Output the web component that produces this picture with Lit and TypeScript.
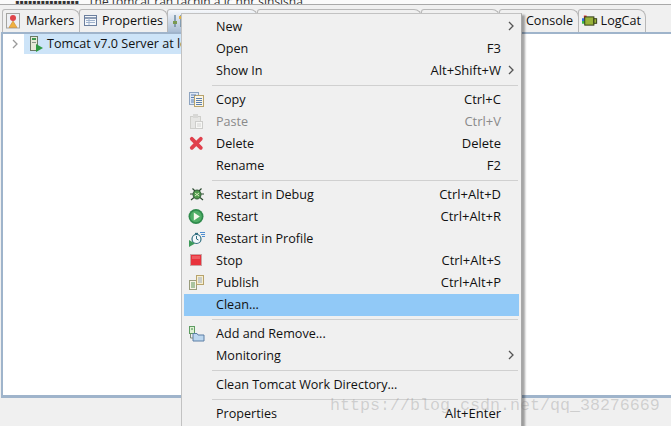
import { LitElement, html, css, svg } from "lit";
import { customElement } from "lit/decorators.js";

type Item = { l?: string; k?: string; sub?: boolean; ic?: string; dis?: boolean; hi?: boolean; sep?: boolean };
const items: Item[] = [
  { l: "New", sub: true },
  { l: "Open", k: "F3" },
  { l: "Show In", k: "Alt+Shift+W", sub: true },
  { sep: true },
  { l: "Copy", k: "Ctrl+C", ic: "copy" },
  { l: "Paste", k: "Ctrl+V", ic: "paste", dis: true },
  { l: "Delete", k: "Delete", ic: "del" },
  { l: "Rename", k: "F2" },
  { sep: true },
  { l: "Restart in Debug", k: "Ctrl+Alt+D", ic: "bug" },
  { l: "Restart", k: "Ctrl+Alt+R", ic: "run" },
  { l: "Restart in Profile", ic: "prof" },
  { l: "Stop", k: "Ctrl+Alt+S", ic: "stop" },
  { l: "Publish", k: "Ctrl+Alt+P", ic: "pub" },
  { l: "Clean...", hi: true },
  { sep: true },
  { l: "Add and Remove...", ic: "add" },
  { l: "Monitoring", sub: true },
  { sep: true },
  { l: "Clean Tomcat Work Directory..." },
  { sep: true },
  { l: "Properties", k: "Alt+Enter" },
];

const icons: Record<string, unknown> = {
  copy: svg`<rect x="1.500" y="1.500" width="9" height="12" fill="#dfe8f5" stroke="#8ea4c0"/><rect x="6.500" y="4.500" width="9" height="11" fill="#fbf6e6" stroke="#b8a36c"/><path d="M3 4h5M3 6.500h3M3 9h3M3 11h3M8 7.500h6M8 9.500h6M8 11.500h6M8 13.500h6" stroke="#5b7fb0"/>`,
  paste: svg`<rect x="2.500" y="3.500" width="10" height="12" fill="#e6e6e4" stroke="#cfcfcb"/><rect x="5" y="1" width="5" height="4" fill="#d8d8d6"/><rect x="7.500" y="8.500" width="7" height="7" fill="#f7f7f5" stroke="#cdcdcb"/><path d="M9 11h4M9 13h4" stroke="#d2d2d0"/>`,
  del: svg`<path d="M3.800 3.800l9 9M12.800 3.800l-9 9" stroke="#e0404c" stroke-width="3.800" stroke-linecap="round"/>`,
  bug: svg`<ellipse cx="9" cy="8.500" rx="4" ry="4.500" fill="#4f9a4d" stroke="#2d5a33"/><path d="M7 7l4 3M11 7l-4 3" stroke="#d9ecc0"/><path d="M4.500 2.500l2.500 2.500M13.500 2.500l-2.500 2.500M2 8h3M13 8h3M3 14l3-2.500M15 14l-3-2.500" stroke="#2c4a30" stroke-width="1.200"/>`,
  run: svg`<circle cx="8" cy="8.500" r="7.500" fill="#2f8a4c"/><circle cx="8" cy="8.500" r="5.800" fill="#4fae66"/><path d="M5.800 4.500l6 4-6 4z" fill="#f3f8ea"/>`,
  prof: svg`<circle cx="8.500" cy="9" r="4.500" fill="#f5f8fb" stroke="#2f6d7f" stroke-width="1.200"/><path d="M8.500 6v3l2 1" fill="none" stroke="#2f6d7f"/><path d="M7 3.500h3" stroke="#2f6d7f" stroke-width="1.300"/><path d="M1 10l6 3.500-6 3.500z" fill="#3d9a5a"/><path d="M12 2.500h5M13 4.500h4M14 6.500h3" stroke="#4f8fd0"/>`,
  stop: svg`<rect x="2.500" y="2.500" width="11" height="11" fill="#e8323c" stroke="#c9a3a3"/><rect x="4" y="4" width="8" height="3" fill="#ef5a60"/>`,
  pub: svg`<rect x="1.500" y="6.500" width="7" height="9" fill="#f6f4e6" stroke="#9a9c7c"/><rect x="8.500" y="1.500" width="7" height="9" fill="#f8efcf" stroke="#b7a36c"/><path d="M3 9h4M3 11h4M3 13h4" stroke="#5d9358"/><path d="M10 4h4M10 6h4M10 8h4" stroke="#9aa9c2"/>`,
  add: svg`<rect x="1.500" y="1.500" width="5" height="7" fill="#dff0d4" stroke="#5e9c62"/><path d="M3 4h2" stroke="#3f8a48"/><path d="M5 8.500h4l1 1.500h6v6H5z" fill="#bcd7ef" stroke="#5c7fa5"/><path d="M2.500 9v4H5" fill="none" stroke="#7c8a7c"/>`,
};

@customElement("app-root")
export class AppRoot extends LitElement {
  static styles = css`
    :host {
      display: block;
      width: 671px;
      height: 426px;
      overflow: hidden;
      position: relative;
      background: #f0f0f0;
      font-family: "Open Sans", "Noto Sans", sans-serif;
      font-size: 12.600px;
      color: #111;
    }
    .page { display: flex; flex-direction: column; height: 100%; }
    .top {
      height: 4px;
      flex: none;
      display: flex;
      gap: 6px;
      box-sizing: content-box;
      background: #fafafa;
      border-bottom: 1px solid #a9a9a9;
      overflow: hidden;
      font-size: 12px;
      line-height: 4px;
      padding-left: 15px;
      color: #333;
      white-space: pre;
    }
    .blk { width: 67px; overflow: hidden; flex: none; }
    .tabs { display: flex; height: 27px; flex: none; padding: 4px 0 0 2px; box-sizing: border-box; background: #f0f0f0; }
    .tab {
      display: flex;
      align-items: center;
      gap: 4px;
      padding: 0 4px 1px 3px;
      border: 1px solid #b8b8b8;
      border-bottom: none;
      border-radius: 3px 8px 0 0;
      margin-right: -1px;
      height: 23px;
      box-sizing: border-box;
      background: #f0f0f0;
      white-space: nowrap;
      flex: none;
    }
    .w-mark { width: 78px; }
    .w-prop { width: 89px; padding-left: 4px; }
    .w-act { width: 91px; padding-left: 4px; background: linear-gradient(#f6f8fb, #a9bdd4); }
    .w-fill { flex: 1; }
    .w-five { width: 79px; }
    .w-con { width: 80px; justify-content: flex-end; padding-right: 5px; }
    .w-log { width: 68px; gap: 3px; }
    .end { width: 26px; flex: none; }
    .panel {
      height: 366px;
      flex: none;
      margin: 0 0 0 1px;
      background: #fff;
      border: 3px solid #9fb4cb;
      border-top-width: 2px;
      border-left-width: 2px;
      border-right: none;
      box-sizing: border-box;
    }
    .tree { display: flex; align-items: center; height: 20px; }
    .tw { width: 21px; flex: none; display: flex; justify-content: flex-end; padding-right: 5px; box-sizing: border-box; }
    .row {
      display: flex;
      align-items: center;
      gap: 3px;
      height: 20px;
      width: 158px;
      background: #cde4f8;
      white-space: nowrap;
      overflow: hidden;
      padding: 0 0 1px 4px;
      box-sizing: border-box;
    }
    .row svg { flex: none; }
    .menu {
      position: absolute;
      left: 181px;
      top: 13px;
      width: 341px;
      height: 420px;
      box-sizing: border-box;
      background: #f0f0f0;
      border: 1px solid #c2c2c2;
      border-right-color: #a8a8a8;
      box-shadow: 3px 2px 2px rgba(0, 0, 0, 0.35);
      padding: 2px;
    }
    .it {
      display: grid;
      grid-template-columns: 32px 1fr auto 18px;
      align-items: center;
      height: 22px;
      box-sizing: border-box;
      padding-bottom: 2px;
      white-space: nowrap;
    }
    .it .ic { display: flex; justify-content: center; padding-right: 8px; }
    .it .k { text-align: right; font-size: 13px; }
    .it .ar { display: flex; justify-content: center; padding-left: 2px; }
    .dis { color: #8a8a8a; }
    .hi { background: #91c9f7; }
    .sepw { height: 7px; display: flex; align-items: center; }
    .sepw i { display: block; flex: 1; height: 1px; margin-left: 28px; margin-right: 1px; background: #d0d0d0; }
    .wm {
      position: absolute;
      left: 330px;
      top: 396px;
      font-family: "Liberation Mono", monospace;
      font-size: 16.670px;
      color: rgba(120, 120, 120, 0.28);
      white-space: nowrap;
      z-index: 2;
    }
  `;

  private chev(c = "#555") {
    return html`<svg width="8" height="10" viewBox="0 0 8 10"><path d="M2 1l4 4-4 4" fill="none" stroke=${c} stroke-width="1.300"/></svg>`;
  }

  render() {
    return html`
      <div class="page">
        <div class="top"><span class="blk">▪▪▪▪▪▪▪▪▪▪▪▪▪▪▪</span><span>The tomcat ran tacnin a ic nnr sinsjsna</span></div>
        <div class="tabs">
          <div class="tab w-mark">
            <svg width="16" height="16" viewBox="0 0 16 16"><rect x=".5" y=".5" width="13" height="14.500" fill="#eef0f4" stroke="#a4a4a0"/><circle cx="7" cy="5" r="3" fill="#e0454a"/><path d="M7 8l4 6.500H3z" fill="#f0b040" stroke="#c98a30" stroke-width=".6"/></svg>
            <span>Markers</span>
          </div>
          <div class="tab w-prop">
            <svg width="14" height="14" viewBox="0 0 14 14"><rect x=".5" y="1.500" width="12" height="10" fill="#f4f7fb" stroke="#6b7f9e"/><path d="M1 4h11" stroke="#6b7f9e" stroke-width="1.500"/><path d="M2 6.500h9M2 8.500h9" stroke="#9fb2cc"/><path d="M5 4v7" stroke="#9fb2cc"/></svg>
            <span>Properties</span>
          </div>
          <div class="tab w-act">
            <svg width="12" height="14" viewBox="0 0 12 14"><path d="M3 1v12M9 1v12" stroke="#6f8aa0" stroke-width="1.500"/><rect x="1" y="7" width="4" height="3" fill="#7a9a50"/><rect x="7" y="2" width="4" height="3" fill="#e0b040"/></svg>
          </div>
          <div class="tab w-fill"></div>
          <div class="tab w-five"></div>
          <div class="tab w-con"><span>Console</span></div>
          <div class="tab w-log">
            <svg width="17" height="12" viewBox="0 0 17 12"><path d="M2 0h3v4H2z" fill="#e0343a"/><path d="M0 3h3v3H0z" fill="#2f6fe0"/><path d="M0 6h3v3H0z" fill="#38b84a"/><rect x="3" y="1.500" width="10" height="9" fill="#99b33a" stroke="#2c3510"/><rect x="13" y="3.500" width="3" height="5" fill="#99b33a" stroke="#2c3510"/></svg>
            <span>LogCat</span>
          </div>
          <div class="end"></div>
        </div>
        <div class="panel">
          <div class="tree">
            <span class="tw">${this.chev("#9a9a9a")}</span>
            <div class="row">
              <svg width="16" height="16" viewBox="0 0 16 16"><rect x="2.500" y=".5" width="7" height="14" fill="#e6e9d8" stroke="#6d7a66"/><rect x="4" y="2" width="4" height="2" fill="#3f9a4f"/><rect x="4" y="6" width="4" height="1" fill="#8a9688"/><path d="M8 8l7 4-7 4z" fill="#2f9a43"/></svg>
              <span>Tomcat v7.0 Server at localhost</span>
            </div>
          </div>
        </div>
      </div>
      <div class="wm">https://blog.csdn.net/qq_38276669</div>
      <div class="menu">
        ${items.map((i) =>
          i.sep
            ? html`<div class="sepw"><i></i></div>`
            : html`<div class="it ${i.dis ? "dis" : ""} ${i.hi ? "hi" : ""}">
                <span class="ic">${i.ic ? html`<svg width="17" height="17" viewBox="0 0 17 17">${icons[i.ic]}</svg>` : ""}</span>
                <span>${i.l}</span>
                <span class="k">${i.k ?? ""}</span>
                <span class="ar">${i.sub ? this.chev() : ""}</span>
              </div>`
        )}
      </div>
    `;
  }
}
